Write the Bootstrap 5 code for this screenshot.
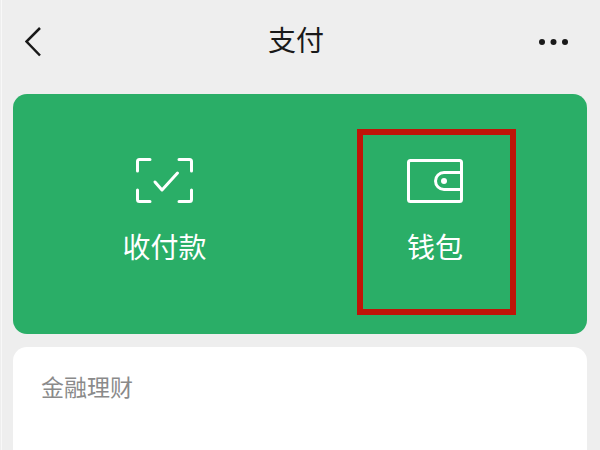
<!DOCTYPE html>
<html lang="zh">
<head>
<meta charset="utf-8">
<title>支付</title>
<link href="https://cdn.jsdelivr.net/npm/bootstrap@5.3.0/dist/css/bootstrap.min.css" rel="stylesheet">
<style>
html,body{margin:0;height:450px;overflow:hidden;}
body{background:#eeeeee;font-family:"Liberation Sans","Noto Sans CJK SC",sans-serif;}
.screen{width:599px;height:450px;overflow:hidden;margin-left:1px;border-left:1px solid #f8f8f8;padding:0 13px 0 11px;}
.topbar{height:94px;margin:0 -13px 0 -11px;padding:0 32px 10px 23px;}
.back-wrap{width:28px;}
.back-ico{width:16px;height:30px;display:block;}
.topbar-title{font-size:28px;line-height:1;color:#191919;text-align:center;}
.more-ico{width:29px;height:6px;display:block;}
.pay-panel{height:240px;background:#2aae67;border-radius:14px;}
.pay-cell{position:relative;height:240px;padding-top:64px;}
.cell-scan{width:303px;}
.cell-wallet{width:238px;}
.pay-text{font-size:28px;line-height:1;color:#fff;}
.hilite{position:absolute;left:41px;top:35px;width:159px;height:186px;border:6px solid #bf1408;}
.scan-ico{width:57px;height:45px;margin-bottom:32px;display:block;}
.wallet-ico{width:56px;height:44px;margin-top:1px;margin-bottom:32px;display:block;}
.fin-panel{height:140px;background:#fff;border-radius:14px;margin-top:13px;padding:30px 28px;}
.fin-title{font-size:23px;line-height:1;color:#8a8a8a;}
</style>
</head>
<body>
<div class="screen">
  <div class="topbar d-flex align-items-center">
    <div class="back-wrap flex-shrink-0">
      <svg class="back-ico" viewBox="0 0 16 30"><path d="M15 1 1.500 14.500 15 28.500" fill="none" stroke="#191919" stroke-width="2.500"/></svg>
    </div>
    <div class="topbar-title flex-grow-1">支付</div>
    <svg class="more-ico flex-shrink-0" viewBox="0 0 29 6"><circle cx="3" cy="3" r="3" fill="#191919"/><circle cx="14.500" cy="3" r="3" fill="#191919"/><circle cx="26" cy="3" r="3" fill="#191919"/></svg>
  </div>
  <div class="pay-panel d-flex">
    <div class="pay-cell cell-scan d-flex flex-column align-items-center">
      <svg class="scan-ico" viewBox="0 0 57 45">
        <g fill="none" stroke="#fff" stroke-width="3" stroke-linecap="round" stroke-linejoin="round">
          <path d="M14 1.500H3.500Q1.500 1.500 1.500 3.500V13"/><path d="M43 1.500H53.500Q55.500 1.500 55.500 3.500V13"/><path d="M1.500 32V41.500Q1.500 43.500 3.500 43.500H14"/><path d="M55.500 32V41.500Q55.500 43.500 53.500 43.500H43"/>
          <path d="M19 24 26 32 41.500 15"/>
        </g>
      </svg>
      <div class="pay-text">收付款</div>
    </div>
    <div class="pay-cell cell-wallet d-flex flex-column align-items-center">
      <svg class="wallet-ico" viewBox="0 0 56 44">
        <rect x="1.500" y="1.500" width="53" height="41" rx="2" fill="none" stroke="#fff" stroke-width="3"/>
        <path d="M54.500 13.500H37a8 8 0 0 0 0 17H54.500" fill="none" stroke="#fff" stroke-width="3"/>
        <circle cx="37" cy="22" r="3" fill="#fff"/>
      </svg>
      <div class="pay-text">钱包</div>
      <div class="hilite"></div>
    </div>
  </div>
  <div class="fin-panel">
    <div class="fin-title">金融理财</div>
  </div>
</div>
</body>
</html>
